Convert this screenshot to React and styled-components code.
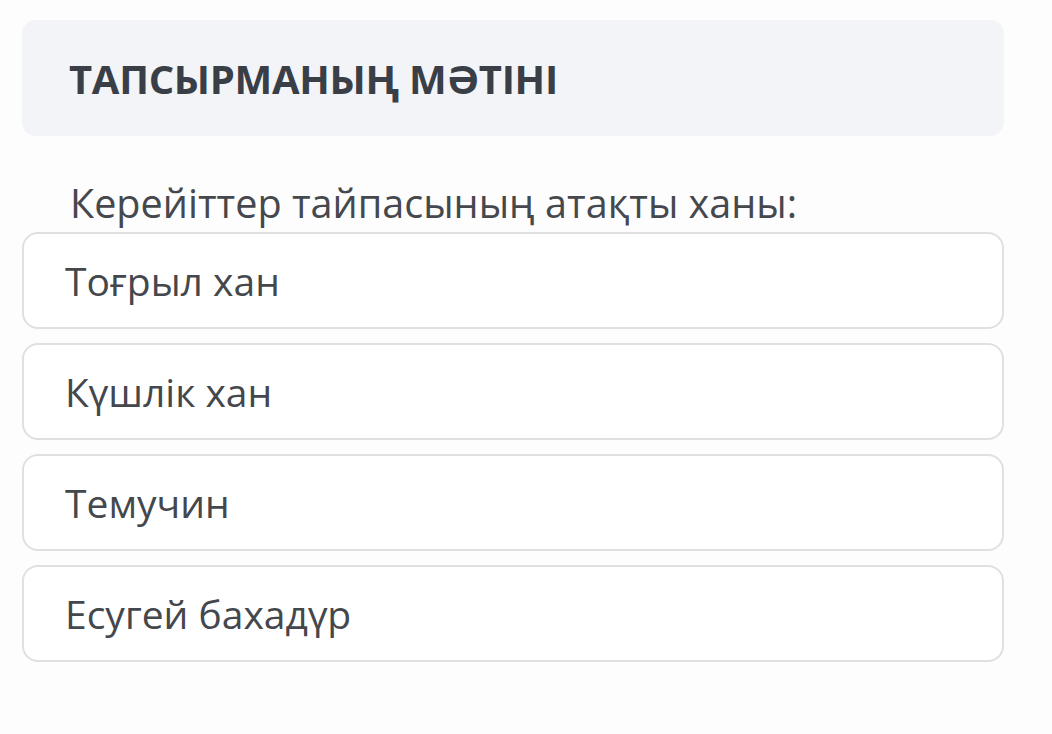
import React from 'react'
import styled, { createGlobalStyle } from 'styled-components'

const GlobalStyle = createGlobalStyle`
  body {
    margin: 0;
    background: #fdfdfd;
    font-family: 'Open Sans', 'Noto Sans', sans-serif;
  }
`

const Page = styled.main`
  width: 982px;
  padding: 20px 0 0 22px;
`

const Header = styled.header`
  height: 116px;
  display: flex;
  align-items: center;
  padding-left: 47px;
  background: #f3f4f7;
  border-radius: 14px;
`

const Title = styled.h1`
  margin: 0;
  font-size: 40px;
  font-weight: 700;
  color: #393e47;
  letter-spacing: -0.3px;
`

const Question = styled.p`
  margin: 41px 0 3px 48px;
  font-size: 39.6px;
  line-height: 52px;
  color: #45484d;
`

const Options = styled.ul`
  list-style: none;
  margin: 0;
  padding: 0;
  display: flex;
  flex-direction: column;
  gap: 14px;
`

const Option = styled.li`
  height: 97px;
  box-sizing: border-box;
  display: flex;
  align-items: center;
  padding-left: 41px;
  border: 2px solid #e0e0e0;
  border-radius: 16px;
  background: #fff;
  font-size: 39px;
  color: #44474c;
`

const answers = ['Тоғрыл хан', 'Күшлік хан', 'Темучин', 'Есугей бахадүр']

const App = () => {
  return (
    <Page>
      <GlobalStyle />
      <Header>
        <Title>ТАПСЫРМАНЫҢ МӘТІНІ</Title>
      </Header>
      <Question>Керейіттер тайпасының атақты ханы:</Question>
      <Options>
        {answers.map((a) => (
          <Option key={a}>{a}</Option>
        ))}
      </Options>
    </Page>
  )
}

export default App
